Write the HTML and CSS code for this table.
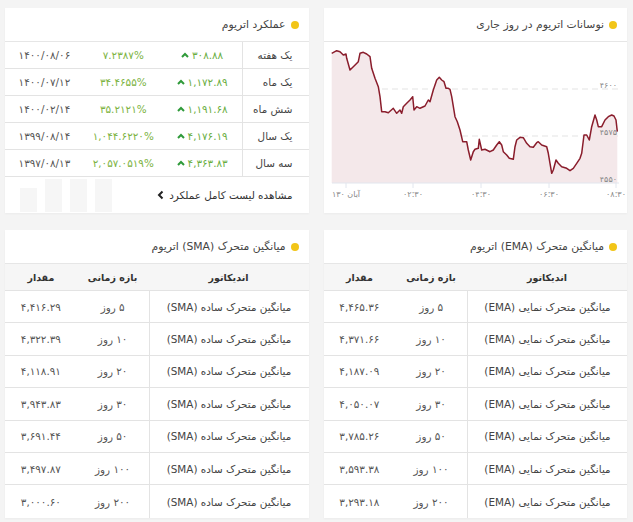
FILE: index.html
```html
<!DOCTYPE html>
<html lang="fa" dir="rtl">
<head>
<meta charset="utf-8">
<title>اتریوم</title>
<link rel="stylesheet" href="styles.css">
</head>
<body>
<main class="page">
  <section class="card chart-card">
    <header class="card-head"><span class="dot"></span><h2 class="card-title">نوسانات اتریوم در روز جاری</h2></header>
    <svg class="chart" width="303" height="171" xmlns="http://www.w3.org/2000/svg">
      <line class="grid" x1="8" y1="47" x2="295" y2="47"/>
      <line class="grid" x1="8" y1="94" x2="295" y2="94"/>
      <path class="area" d="M7.7 11.3 L12.7 8.7 L16 9.7 L19.3 13 L22 12 L22.7 16.3 L26 28 L29.3 24.7 L34.3 19.7 L36 11.3 L39.3 10.3 L42.7 12 L46 14.7 L47.7 26.3 L51 36.3 L54.3 44.7 L56 54.7 L57.7 69.7 L61 69.7 L64.3 70.7 L69.3 66.3 L72.7 71.3 L76 68 L77.7 71.3 L79.3 64.7 L82.7 61.3 L86 58 L88.7 54.7 L90 68 L92.7 64.7 L96 66.3 L101 64 L104.3 58 L106 59.7 L109.3 48 L112.7 38 L115.3 35.3 L117.7 38 L120 39.7 L122 46.3 L124.3 46.3 L126 47.3 L127.7 54.7 L131 74.7 L133.3 79.7 L136 88 L138.7 99.7 L142.7 99.7 L144.3 108 L146.7 118 L149.3 109.7 L151 107.3 L154.3 106.3 L155.3 97.3 L157.7 108 L161 107.3 L166 109.7 L169.3 108 L172.7 103 L175.3 99.7 L177.7 103 L179.3 109.7 L182.7 113 L185.3 116.3 L189.3 117.3 L191 104.7 L192.7 98 L196 95.3 L199.3 95.7 L202.7 101.3 L206 104.7 L209.3 105.3 L212.7 100.7 L214.3 99.7 L217.7 103 L222.7 104.7 L224.3 111.3 L226 121.3 L227.7 131.3 L229.3 128 L232 118 L234.3 121.3 L237.7 124.7 L242.7 126.3 L246 128.7 L249.3 126.3 L252.7 121.3 L256 116.3 L257.7 111.3 L260 93 L262.7 93 L265.3 98 L267.7 84.7 L271 73 L272.7 78 L274.3 84.7 L277.7 84.7 L281 78 L284.3 74.7 L287.7 73 L290 74 L292 78 L293.3 89.7 L293.3 141 L7.7 141 Z"/>
      <path class="line" d="M7.7 11.3 L12.7 8.7 L16 9.7 L19.3 13 L22 12 L22.7 16.3 L26 28 L29.3 24.7 L34.3 19.7 L36 11.3 L39.3 10.3 L42.7 12 L46 14.7 L47.7 26.3 L51 36.3 L54.3 44.7 L56 54.7 L57.7 69.7 L61 69.7 L64.3 70.7 L69.3 66.3 L72.7 71.3 L76 68 L77.7 71.3 L79.3 64.7 L82.7 61.3 L86 58 L88.7 54.7 L90 68 L92.7 64.7 L96 66.3 L101 64 L104.3 58 L106 59.7 L109.3 48 L112.7 38 L115.3 35.3 L117.7 38 L120 39.7 L122 46.3 L124.3 46.3 L126 47.3 L127.7 54.7 L131 74.7 L133.3 79.7 L136 88 L138.7 99.7 L142.7 99.7 L144.3 108 L146.7 118 L149.3 109.7 L151 107.3 L154.3 106.3 L155.3 97.3 L157.7 108 L161 107.3 L166 109.7 L169.3 108 L172.7 103 L175.3 99.7 L177.7 103 L179.3 109.7 L182.7 113 L185.3 116.3 L189.3 117.3 L191 104.7 L192.7 98 L196 95.3 L199.3 95.7 L202.7 101.3 L206 104.7 L209.3 105.3 L212.7 100.7 L214.3 99.7 L217.7 103 L222.7 104.7 L224.3 111.3 L226 121.3 L227.7 131.3 L229.3 128 L232 118 L234.3 121.3 L237.7 124.7 L242.7 126.3 L246 128.7 L249.3 126.3 L252.7 121.3 L256 116.3 L257.7 111.3 L260 93 L262.7 93 L265.3 98 L267.7 84.7 L271 73 L272.7 78 L274.3 84.7 L277.7 84.7 L281 78 L284.3 74.7 L287.7 73 L290 74 L292 78 L293.3 89.7"/>
      <line class="axis" x1="8" y1="141" x2="295" y2="141"/>
      <line class="axis" x1="22" y1="141" x2="22" y2="146"/>
      <line class="axis" x1="89" y1="141" x2="89" y2="146"/>
      <line class="axis" x1="157" y1="141" x2="157" y2="146"/>
      <line class="axis" x1="225" y1="141" x2="225" y2="146"/>
      <line class="axis" x1="292" y1="141" x2="292" y2="146"/>
      <text class="ylabel" x="293" y="46">۴۶۰۰</text>
      <text class="ylabel" x="293" y="93">۴۵۷۵</text>
      <text class="ylabel" x="293" y="140">۴۵۵۰</text>
      <text class="xlabel xdate" x="22" y="155">آبان ۱۳۰</text>
      <text class="xlabel" x="89" y="155">۰۲:۳۰</text>
      <text class="xlabel" x="157" y="155">۰۴:۳۰</text>
      <text class="xlabel" x="225" y="155">۰۶:۳۰</text>
      <text class="xlabel" x="292" y="155">۰۸:۳۰</text>
    </svg>
  </section>

  <section class="card perf-card">
    <header class="card-head"><span class="dot"></span><h2 class="card-title">عملکرد اتریوم</h2></header>
    <div class="perf-table">
      <div class="perf-row"><span class="perf-label">یک هفته</span><span class="perf-change">۳۰۸.۸۸<svg class="up" width="8" height="6"><polyline points="1,5 4,2 7,5"/></svg></span><span class="perf-pct">۷.۲۳۸۷%</span><span class="perf-date">۱۴۰۰/۰۸/۰۶</span></div>
      <div class="perf-row"><span class="perf-label">یک ماه</span><span class="perf-change">۱,۱۷۲.۸۹<svg class="up" width="8" height="6"><polyline points="1,5 4,2 7,5"/></svg></span><span class="perf-pct">۳۴.۴۶۵۵%</span><span class="perf-date">۱۴۰۰/۰۷/۱۲</span></div>
      <div class="perf-row"><span class="perf-label">شش ماه</span><span class="perf-change">۱,۱۹۱.۶۸<svg class="up" width="8" height="6"><polyline points="1,5 4,2 7,5"/></svg></span><span class="perf-pct">۳۵.۲۱۲۱%</span><span class="perf-date">۱۴۰۰/۰۲/۱۴</span></div>
      <div class="perf-row"><span class="perf-label">یک سال</span><span class="perf-change">۴,۱۷۶.۱۹<svg class="up" width="8" height="6"><polyline points="1,5 4,2 7,5"/></svg></span><span class="perf-pct">۱,۰۴۴.۶۲۲۰%</span><span class="perf-date">۱۳۹۹/۰۸/۱۴</span></div>
      <div class="perf-row"><span class="perf-label">سه سال</span><span class="perf-change">۴,۳۶۳.۸۳<svg class="up" width="8" height="6"><polyline points="1,5 4,2 7,5"/></svg></span><span class="perf-pct">۲,۰۵۷.۰۵۱۹%</span><span class="perf-date">۱۳۹۷/۰۸/۱۳</span></div>
    </div>
    <footer class="perf-foot">
      <a class="more-link" href="#">مشاهده لیست کامل عملکرد<svg class="chev" width="7" height="10"><polyline points="5.5,1.5 2,5 5.5,8.5"/></svg></a>
      <div class="ghost-bars"><span class="gbar"></span><span class="gbar"></span><span class="gbar"></span><span class="gbar short"></span></div>
    </footer>
  </section>

  <section class="card ma-card">
    <header class="card-head"><span class="dot"></span><h2 class="card-title">میانگین متحرک (EMA) اتریوم</h2></header>
    <div class="ma-table">
      <div class="ma-head"><span>اندیکاتور</span><span>بازه زمانی</span><span>مقدار</span></div>
      <div class="ma-row"><span class="ma-name">میانگین متحرک نمایی (EMA)</span><span>۵ روز</span><span>۴,۴۶۵.۳۶</span></div>
      <div class="ma-row"><span class="ma-name">میانگین متحرک نمایی (EMA)</span><span>۱۰ روز</span><span>۴,۳۷۱.۶۶</span></div>
      <div class="ma-row"><span class="ma-name">میانگین متحرک نمایی (EMA)</span><span>۲۰ روز</span><span>۴,۱۸۷.۰۹</span></div>
      <div class="ma-row"><span class="ma-name">میانگین متحرک نمایی (EMA)</span><span>۳۰ روز</span><span>۴,۰۵۰.۰۷</span></div>
      <div class="ma-row"><span class="ma-name">میانگین متحرک نمایی (EMA)</span><span>۵۰ روز</span><span>۳,۷۸۵.۲۶</span></div>
      <div class="ma-row"><span class="ma-name">میانگین متحرک نمایی (EMA)</span><span>۱۰۰ روز</span><span>۳,۵۹۳.۳۸</span></div>
      <div class="ma-row"><span class="ma-name">میانگین متحرک نمایی (EMA)</span><span>۲۰۰ روز</span><span>۳,۲۹۳.۱۸</span></div>
    </div>
  </section>

  <section class="card ma-card">
    <header class="card-head"><span class="dot"></span><h2 class="card-title">میانگین متحرک (SMA) اتریوم</h2></header>
    <div class="ma-table">
      <div class="ma-head"><span>اندیکاتور</span><span>بازه زمانی</span><span>مقدار</span></div>
      <div class="ma-row"><span class="ma-name">میانگین متحرک ساده (SMA)</span><span>۵ روز</span><span>۴,۴۱۶.۲۹</span></div>
      <div class="ma-row"><span class="ma-name">میانگین متحرک ساده (SMA)</span><span>۱۰ روز</span><span>۴,۳۲۲.۳۹</span></div>
      <div class="ma-row"><span class="ma-name">میانگین متحرک ساده (SMA)</span><span>۲۰ روز</span><span>۴,۱۱۸.۹۱</span></div>
      <div class="ma-row"><span class="ma-name">میانگین متحرک ساده (SMA)</span><span>۳۰ روز</span><span>۳,۹۴۳.۸۳</span></div>
      <div class="ma-row"><span class="ma-name">میانگین متحرک ساده (SMA)</span><span>۵۰ روز</span><span>۳,۶۹۱.۴۴</span></div>
      <div class="ma-row"><span class="ma-name">میانگین متحرک ساده (SMA)</span><span>۱۰۰ روز</span><span>۳,۴۹۷.۸۷</span></div>
      <div class="ma-row"><span class="ma-name">میانگین متحرک ساده (SMA)</span><span>۲۰۰ روز</span><span>۳,۰۰۰.۶۰</span></div>
    </div>
  </section>
</main>
</body>
</html>
```
FILE: styles.css
```css
* { box-sizing: border-box; }
html, body { margin: 0; padding: 0; }
body {
  background: #f4f4f4;
  font-family: "DejaVu Sans", "Noto Sans", sans-serif;
  font-size: 10.4px;
  color: #555;
  width: 633px;
  height: 522px;
  overflow: hidden;
}
.page {
  display: grid;
  grid-template-columns: 1fr 1fr;
  column-gap: 15px;
  row-gap: 17px;
  padding: 8px 6px 0 5px;
}
.card {
  background: #fff;
  box-shadow: 0 1px 2px rgba(0,0,0,0.04);
  overflow: hidden;
}
.card-head {
  height: 34px;
  border-bottom: 1px solid #e6e6e6;
  display: flex;
  align-items: center;
  gap: 5px;
  padding-right: 10px;
}
.dot {
  width: 8px;
  height: 8px;
  border-radius: 50%;
  background: #f2c518;
  flex: none;
}
.card-title {
  margin: 0;
  font-size: 10.8px;
  font-weight: normal;
  color: #444;
}
.chart { display: block; }
.chart .grid { stroke: #e3e3e3; stroke-width: 1; stroke-dasharray: 6 4; }
.chart .area { fill: #f4e8ea; stroke: none; }
.chart .line { fill: none; stroke: #8a1d2c; stroke-width: 1.5; stroke-linejoin: round; }
.chart .axis { stroke: #e2e6ee; stroke-width: 1; }
.chart text { font-family: "DejaVu Sans", sans-serif; font-size: 8px; fill: #888; }
.chart .ylabel { direction: ltr; text-anchor: end; }
.chart .xlabel { direction: ltr; text-anchor: middle; }
.chart .xdate { direction: rtl; }

.perf-row {
  display: grid;
  grid-template-columns: 67px 1fr 1fr 1fr;
  height: 27px;
  border-bottom: 1px solid #e3e3e3;
  align-items: center;
  text-align: center;
}
.perf-row > span { display: flex; align-items: center; justify-content: center; height: 100%; }
.perf-label {
  justify-content: flex-start !important;
  padding-right: 16px;
  border-left: 1px solid #e3e3e3;
  color: #444;
}
.perf-change { color: #6aae3f; gap: 3px; }
.perf-pct { color: #7cb342; }
.perf-date { color: #555; }
.up { display: block; }
.up polyline { fill: none; stroke: #2f9a3a; stroke-width: 2; }

.perf-foot {
  height: 35px;
  display: flex;
  align-items: center;
  padding-right: 16px;
}
.more-link {
  display: flex;
  align-items: center;
  gap: 5px;
  color: #333;
  text-decoration: none;
  font-size: 10.4px;
}
.chev { display: block; }
.chev polyline { fill: none; stroke: #222; stroke-width: 2; }
.ghost-bars {
  margin-right: auto;
  align-self: stretch;
  display: flex;
  align-items: flex-end;
  gap: 8px;
  padding: 2px 0 0 15px;
}
.gbar { width: 17px; height: 33px; background: #f6f6f6; }
.gbar.short { height: 24px; }

.ma-head, .ma-row {
  display: grid;
  grid-template-columns: 160px 1fr 1fr;
  align-items: center;
  text-align: center;
}
.ma-head {
  height: 27px;
  background: #f6f6f6;
  border-bottom: 1px solid #e3e3e3;
  color: #333;
  font-weight: bold;
  font-size: 9.5px;
}
.ma-row {
  height: 32.4px;
  border-bottom: 1px solid #e3e3e3;
}
.ma-row:last-child { border-bottom: none; }
.ma-row > span { display: flex; align-items: center; justify-content: center; height: 100%; }
.ma-name { border-left: 1px solid #e3e3e3; color: #444; }
```
